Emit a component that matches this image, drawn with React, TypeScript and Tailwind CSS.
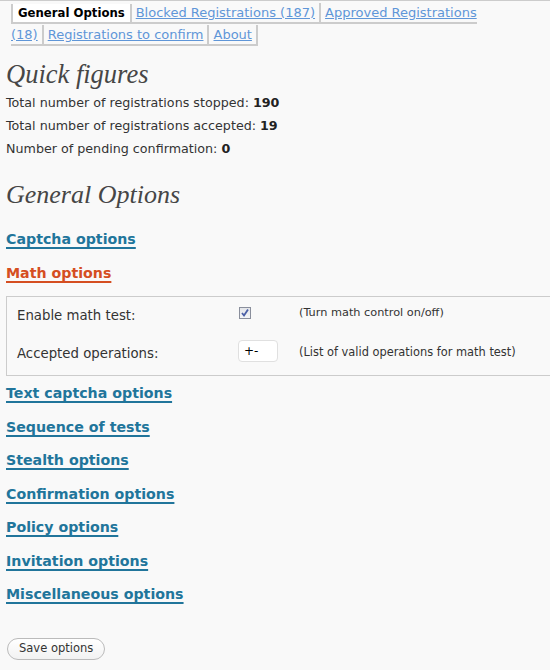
import React from "react";

const body = { fontFamily: '"DejaVu Sans", Verdana, sans-serif' };
const serif = { fontFamily: '"Liberation Serif", Georgia, serif' };

function Tab({ children, active, first }: { children: React.ReactNode; active?: boolean; first?: boolean }) {
  return (
    <span
      className={
        "pt-[2px] pb-[2px] border-r-2 border-b-2 border-[#ccc] [box-decoration-break:slice] " +
        (first ? "border-l-2 " : "") +
        (active ? "px-[5px] bg-white font-bold text-black text-[11.7px]" : "px-[4px]")
      }
    >
      {children}
    </span>
  );
}

function BigLink({ children, orange }: { children: React.ReactNode; orange?: boolean }) {
  return (
    <div className="h-[33.5px] flex items-center">
      <a
        href="#"
        className={
          "text-[14.2px] font-bold underline decoration-2 underline-offset-[3px] " +
          (orange ? "text-[#d54e21]" : "text-[#21759b]")
        }
      >
        {children}
      </a>
    </div>
  );
}

export default function App() {
  return (
    <div className="w-[550px] h-[670px] bg-[#f9f9f9] overflow-hidden text-[#333]" style={body}>
      {/* tabs */}
      <div className="border-t border-[#ccc] pl-[11px] pt-[1px] text-[13px] leading-[21px]">
        <Tab active first>General Options</Tab>
        <Tab>
          <a href="#" className="underline text-[#5f96d8]">Blocked Registrations (187)</a>
        </Tab>
        <Tab>
          <a href="#" className="underline text-[#5f96d8]">Approved Registrations</a>
          <br />
          <a href="#" className="underline text-[#5f96d8]">(18)</a>
        </Tab>
        <Tab>
          <a href="#" className="underline text-[#5f96d8]">Registrations to confirm</a>
        </Tab>
        <Tab>
          <a href="#" className="underline text-[#5f96d8]">About</a>
        </Tab>
      </div>

      <div className="px-[6px]">
        <h2 className="mt-[14px] text-[26.5px] italic text-[#464646] leading-[30px]" style={serif}>
          Quick figures
        </h2>
        <div className="text-[12.7px] mt-[2px]">
          <p className="h-[23px] flex items-center">
            Total number of registrations stopped:&nbsp;<b className="text-[#222]">190</b>
          </p>
          <p className="h-[23px] flex items-center">
            Total number of registrations accepted:&nbsp;<b className="text-[#222]">19</b>
          </p>
          <p className="h-[23px] flex items-center">
            Number of pending confirmation:&nbsp;<b className="text-[#222]">0</b>
          </p>
        </div>

        <h2 className="mt-[20px] text-[26px] italic text-[#464646] leading-[30px]" style={serif}>
          General Options
        </h2>

        <div className="mt-[13px]">
          <BigLink>Captcha options</BigLink>
          <BigLink orange>Math options</BigLink>
        </div>

        <div className="mt-[6px] -mr-[20px] border border-[#ccc] h-[80px] flex flex-col text-[13.3px]">
          <div className="flex items-start h-[38px]">
            <div className="w-[231px] pl-[10px] pt-[11px] leading-[16px]">Enable math test:</div>
            <div className="w-[61px] pt-[10px] pl-[1px]">
              <div className="flex w-[12px] h-[12px] border border-[#8a8f9c] bg-gradient-to-b from-[#e4e6ea] to-[#f4f5f7] items-center justify-center">
                <svg width="10" height="10" viewBox="0 0 10 10">
                  <path d="M2 5 L4 7.5 L8 1.5" fill="none" stroke="#4a5fa6" strokeWidth="1.8" />
                </svg>
              </div>
            </div>
            <div className="text-[11.3px] pt-[9px] leading-[14px]">(Turn math control on/off)</div>
          </div>
          <div className="flex items-start h-[40px]">
            <div className="w-[231px] pl-[10px] pt-[11px] leading-[16px]">Accepted operations:</div>
            <div className="w-[61px] pt-[5px]">
              <div className="w-[40px] h-[22px] bg-white border border-[#e0e0e0] rounded-[4px] text-[12px] text-black leading-[20px] pl-[5px]">
                +-
              </div>
            </div>
            <div className="text-[11.4px] pt-[10px] leading-[14px]">(List of valid operations for math test)</div>
          </div>
        </div>

        <div className="mt-[1px]">
          <BigLink>Text captcha options</BigLink>
          <BigLink>Sequence of tests</BigLink>
          <BigLink>Stealth options</BigLink>
          <BigLink>Confirmation options</BigLink>
          <BigLink>Policy options</BigLink>
          <BigLink>Invitation options</BigLink>
          <BigLink>Miscellaneous options</BigLink>
        </div>

        <button className="mt-[26px] ml-[1px] h-[22px] px-[11px] rounded-full border border-[#bbb] bg-gradient-to-b from-white to-[#f2f2f2] text-[11.5px] text-[#333]">
          Save options
        </button>
      </div>
    </div>
  );
}
